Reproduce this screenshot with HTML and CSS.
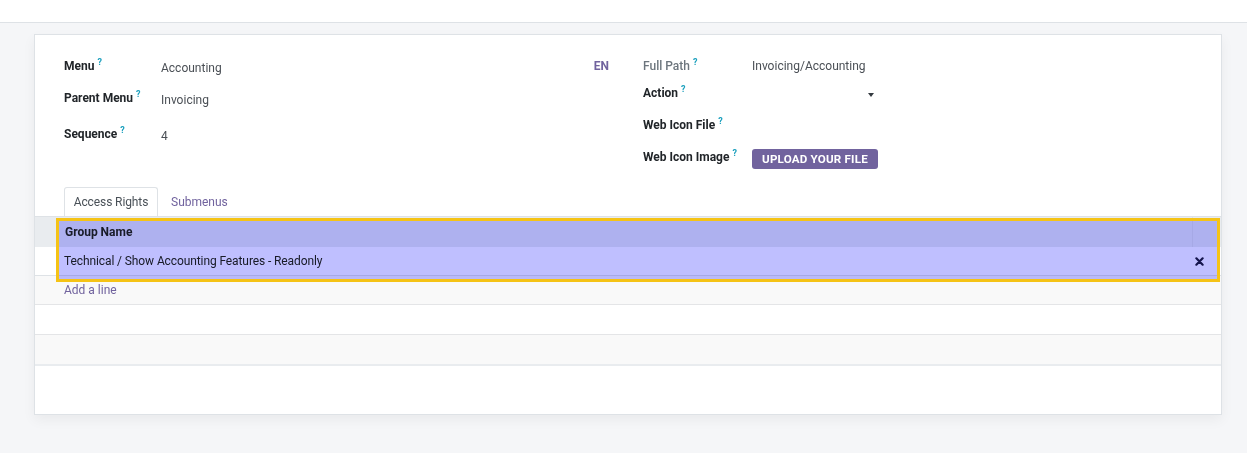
FILE: index.html
```html
<!DOCTYPE html>
<html lang="en">
<head>
<meta charset="utf-8">
<title>Menu - Accounting</title>
<link rel="stylesheet" href="styles.css">
</head>
<body>
<div class="topbar"></div>
<main class="content">
  <div class="sheet">
    <div class="groups">
      <div class="group group-left">
        <div class="label">Menu<sup class="tip">?</sup></div>
        <div class="value">Accounting</div>
        <div class="lang">EN</div>
        <div class="label">Parent Menu<sup class="tip">?</sup></div>
        <div class="value">Invoicing</div>
        <div></div>
        <div class="label">Sequence<sup class="tip">?</sup></div>
        <div class="value">4</div>
        <div></div>
      </div>
      <div class="group group-right">
        <div class="label label-muted">Full Path<sup class="tip">?</sup></div>
        <div class="value">Invoicing/Accounting</div>
        <div class="label">Action<sup class="tip">?</sup></div>
        <div class="value select"><span class="caret"></span></div>
        <div class="label">Web Icon File<sup class="tip">?</sup></div>
        <div class="value"></div>
        <div class="label">Web Icon Image<sup class="tip">?</sup></div>
        <div class="value"><button class="upload" type="button">Upload your file</button></div>
      </div>
    </div>

    <div class="tabs">
      <div class="tab active">Access Rights</div>
      <div class="tab">Submenus</div>
    </div>

    <div class="list">
      <div class="row head">
        <div class="cell spacer"></div>
        <div class="cell main">Group Name</div>
        <div class="cell last"></div>
      </div>
      <div class="row data">
        <div class="cell spacer"></div>
        <div class="cell main">Technical / Show Accounting Features - Readonly</div>
        <div class="cell last">
          <svg class="del" viewBox="0 0 10 10" width="9" height="9"><path d="M1.5 1.5 L8.5 8.5 M8.5 1.5 L1.5 8.5" stroke="#1b1b4d" stroke-width="2.4" stroke-linecap="round"/></svg>
        </div>
      </div>
      <div class="row add stripe">
        <div class="cell spacer"></div>
        <div class="cell main"><a class="add-link">Add a line</a></div>
        <div class="cell last"></div>
      </div>
      <div class="row empty"></div>
      <div class="row empty stripe final"></div>
      <div class="highlight"><div class="tint"></div></div>
    </div>
  </div>
</main>
</body>
</html>
```

FILE: styles.css
```css
* { box-sizing: border-box; }
html, body { margin: 0; padding: 0; }
body {
  width: 1247px;
  height: 453px;
  overflow: hidden;
  background: #f5f6f8;
  font-family: Roboto, "Liberation Sans", sans-serif;
  font-size: 12px;
  color: #212529;
}
.topbar {
  height: 23px;
  background: #ffffff;
  border-bottom: 1px solid #dee2e6;
}
.content {
  padding: 11px 25px 0 34px;
}
.sheet {
  background: #ffffff;
  border: 1px solid #dee2e6;
  box-shadow: 0 5px 12px rgba(0, 0, 0, 0.05);
  height: 381px;
  padding: 22px 29px 0 29px;
}
.groups {
  display: flex;
  align-items: flex-start;
  gap: 34px;
}
.group {
  display: grid;
  line-height: 18px;
}
.group-left {
  width: 545px;
  grid-template-columns: 97px 1fr auto;
  grid-template-rows: 32px 36px 18px;
  align-items: start;
}
.group-left .value { padding-top: 2px; }
.group-right {
  grid-template-columns: 109px 126px;
  grid-template-rows: 27px 32px 32px 20px;
  align-items: start;
}
.label {
  font-weight: bold;
  color: #212529;
  white-space: nowrap;
}
.label-muted {
  font-weight: 500;
  color: #6c757d;
}
.tip {
  color: #1a9fbd;
  font-size: 9px;
  font-weight: bold;
  margin-left: 3px;
  vertical-align: top;
  position: relative;
  top: -4px;
}
.value {
  color: #4a4f55;
  white-space: nowrap;
}
.lang {
  color: #71639e;
  font-weight: bold;
}
.select {
  display: flex;
  justify-content: flex-end;
  align-items: center;
  height: 18px;
  padding-right: 4px;
  padding-top: 4px;
}
.caret {
  width: 0;
  height: 0;
  border-left: 3.5px solid transparent;
  border-right: 3.5px solid transparent;
  border-top: 4px solid #343a40;
}
.upload {
  font-family: inherit;
  font-size: 11.6px;
  font-weight: bold;
  text-transform: uppercase;
  white-space: nowrap;
  color: #ffffff;
  background: #71639e;
  border: 0;
  border-radius: 3px;
  height: 20px;
  width: 126px;
  padding: 0;
  margin-top: 1px;
  line-height: 20px;
  letter-spacing: 0.2px;
}
.tabs {
  display: flex;
  margin-top: 19px;
  height: 29px;
}
.tab {
  padding: 0 12px;
  line-height: 28px;
  color: #71639e;
  white-space: nowrap;
  border: 1px solid transparent;
  border-bottom: 0;
}
.tab.active {
  color: #495057;
  background: #ffffff;
  border-color: #dee2e6;
  border-radius: 3px 3px 0 0;
  padding: 0;
  width: 94px;
  text-align: center;
  letter-spacing: -0.1px;
}
.list {
  position: relative;
  margin: 0 -29px;
}
.row {
  display: flex;
  height: 29px;
  border-bottom: 1px solid #e4e5e7;
  align-items: center;
}
.cell.spacer { width: 29px; flex: none; }
.cell.main { flex: 1; white-space: nowrap; }
.cell.last {
  width: 29px;
  flex: none;
  align-self: stretch;
  display: flex;
  align-items: center;
  padding-left: 3px;
}
.row.head {
  height: 31px;
  background: #e9ecef;
  border-top: 1px solid #dee2e6;
  border-bottom: 0;
  font-weight: bold;
  color: #212529;
}
.row.head .cell.spacer { width: 30px; }
.row.head .cell.last { border-left: 1px solid #dee2e6; }
.row.data { height: 29px; border-bottom-color: #dee2e6; color: #212529; letter-spacing: -0.1px; }
.row.stripe { background: #f9f9f9; }
.row.empty { height: 30px; }
.row.final { height: 31px; border-bottom: 2px solid #e9ecef; }
.add-link { color: #71639e; }
.highlight {
  position: absolute;
  left: 21px;
  right: 1px;
  top: 2px;
  height: 64px;
  border: 3px solid #f5c316;
  pointer-events: none;
}
.tint {
  position: absolute;
  inset: 0;
  background: #bfbfff;
  mix-blend-mode: multiply;
}
```
